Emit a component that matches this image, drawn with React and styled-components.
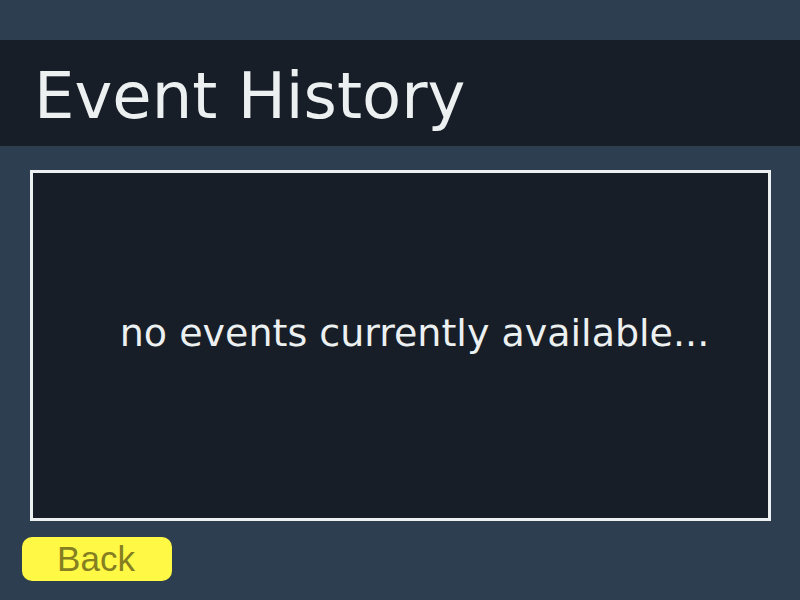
import React from "react";
import styled, { createGlobalStyle } from "styled-components";

const GlobalStyle = createGlobalStyle`
  *, *::before, *::after { box-sizing: border-box; }
  body { margin: 0; background: #2d3e50; }
`;

const Screen = styled.div`
  min-height: 100vh;
  display: flex;
  flex-direction: column;
  padding: 40px 0 19px;
  font-family: "DejaVu Sans", Verdana, sans-serif;
  color: #ecf0f1;
`;

const Header = styled.header`
  padding: 19px 34px 13px;
  background: #171e27;
`;

const Title = styled.h1`
  margin: 0;
  font-size: 64px;
  line-height: 74px;
  font-weight: 400;
`;

const EventPanel = styled.main`
  flex: 1;
  display: flex;
  align-items: center;
  justify-content: center;
  margin: 24px 29px 16px 30px;
  padding: 0 0 26px 28px;
  background: #171e27;
  border: 3px solid #ecf0f1;
`;

const EmptyMessage = styled.p`
  margin: 0;
  font-size: 38px;
  line-height: 44px;
`;

const BackButton = styled.button`
  align-self: flex-start;
  width: 150px;
  height: 44px;
  margin-left: 22px;
  padding: 0 2px 0 0;
  border: 0;
  border-radius: 10px;
  background: #fff845;
  color: #857f22;
  font-family: "Liberation Sans", Arial, sans-serif;
  font-size: 35px;
  line-height: 44px;
  cursor: pointer;
`;

export default function App() {
  return (
    <>
      <GlobalStyle />
      <Screen>
        <Header>
          <Title>Event History</Title>
        </Header>
        <EventPanel>
          <EmptyMessage>no events currently available...</EmptyMessage>
        </EventPanel>
        <BackButton type="button">Back</BackButton>
      </Screen>
    </>
  );
}
